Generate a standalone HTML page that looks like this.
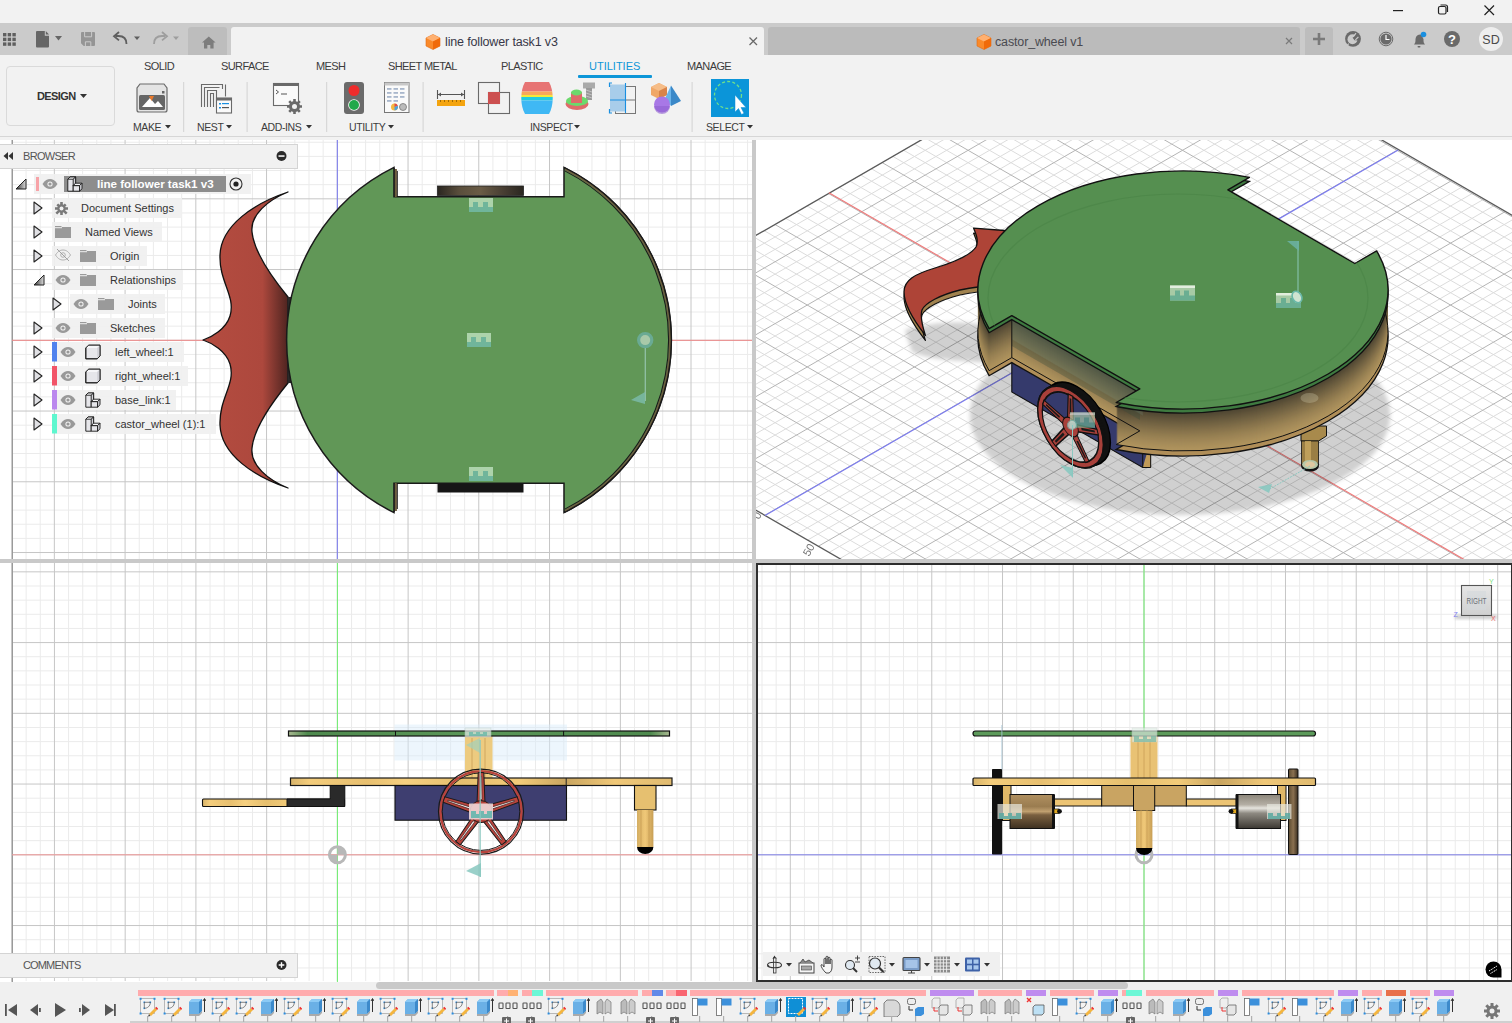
<!DOCTYPE html><html><head><meta charset="utf-8"><style>
*{margin:0;padding:0;box-sizing:border-box}
html,body{width:1512px;height:1023px;overflow:hidden;background:#f2f2f2;font-family:"Liberation Sans",sans-serif;position:relative}
.a{position:absolute}
.t{position:absolute;white-space:nowrap;color:#3c3c3c;line-height:1}
svg{position:absolute;overflow:visible}
.tab{font-size:11px;color:#3c3c3c;letter-spacing:-0.6px;top:61px!important}
.lbl{font-size:10.5px;color:#3c3c3c;letter-spacing:-0.4px}
.row{position:absolute;height:20px;background:rgba(240,240,240,0.92)}
.rt{position:absolute;font-size:11px;color:#333;white-space:nowrap;line-height:1}
</style></head><body>
<!-- TITLE BAR -->
<svg width="1512" height="23" style="left:0;top:0">
<rect x="1393" y="10" width="10" height="1.2" fill="#222"/>
<rect x="1438.5" y="6.5" width="7.5" height="7.5" rx="1.5" fill="none" stroke="#222" stroke-width="1.2"/>
<path d="M1440.5 5h5a2 2 0 0 1 2 2v5" fill="none" stroke="#222" stroke-width="1.2"/>
<path d="M1484.5 5.5l9.5 9.5M1494 5.5l-9.5 9.5" stroke="#222" stroke-width="1.2"/>
</svg>
<!-- TAB BAR -->
<div class="a" style="left:0;top:23px;width:1512px;height:32px;background:#cbcbcb"></div>
<svg width="1512" height="32" style="left:0;top:23px">
<!-- grid icon -->
<g fill="#5f5f5f"><rect x="3" y="10" width="3.4" height="3.4"/><rect x="7.7" y="10" width="3.4" height="3.4"/><rect x="12.4" y="10" width="3.4" height="3.4"/><rect x="3" y="14.7" width="3.4" height="3.4"/><rect x="7.7" y="14.7" width="3.4" height="3.4"/><rect x="12.4" y="14.7" width="3.4" height="3.4"/><rect x="3" y="19.4" width="3.4" height="3.4"/><rect x="7.7" y="19.4" width="3.4" height="3.4"/><rect x="12.4" y="19.4" width="3.4" height="3.4"/></g>
<!-- file icon -->
<path d="M37 8h7.8v4.8h4.2v10.8a1 1 0 0 1-1 1h-11a1 1 0 0 1-1-1v-14.6a1 1 0 0 1 1-1z" fill="#666"/><path d="M45.8 8l3.2 3.6h-3.2z" fill="#666"/>
<path d="M55 13h7l-3.5 4.5z" fill="#666"/>
<!-- save -->
<path d="M82 9h12a1 1 0 0 1 1 1v12a1 1 0 0 1-1 1h-10.3l-2.7-2.7v-10.3a1 1 0 0 1 1-1z" fill="#959595"/><path d="M84.6 9v4.8h7v-4.8M85.4 23v-4.2h5.4v4.2" fill="none" stroke="#cbcbcb" stroke-width="1"/>
<!-- undo -->
<path d="M126.5 21c0-6-3-8-8-8h-3" fill="none" stroke="#5f5f5f" stroke-width="1.8"/><path d="M119 9l-5 4.2 5 4.2" fill="none" stroke="#5f5f5f" stroke-width="1.8"/>
<path d="M134 13.5h6l-3 3.5z" fill="#5f5f5f"/>
<!-- redo -->
<path d="M154 21c0-6 3-8 8-8h3" fill="none" stroke="#9e9e9e" stroke-width="1.8"/><path d="M162 9l5 4.2-5 4.2" fill="none" stroke="#9e9e9e" stroke-width="1.8"/>
<path d="M173 13.5h6l-3 3.5z" fill="#9e9e9e"/>
<!-- home tab -->
<path d="M188 32V7a3 3 0 0 1 3-3h33a3 3 0 0 1 3 3v25z" fill="#bdbdbd"/>
<path d="M202 19.5l6.8-6 6.8 6h-2v6h-3.3v-3.6h-3v3.6h-3.3v-6z" fill="#7d7d7d"/>
<!-- active tab -->
<path d="M231 32V7a3 3 0 0 1 3-3h527a3 3 0 0 1 3 3v25z" fill="#f2f2f2"/>
<g transform="translate(426,11.5)"><path d="M7 0l7 3.5v8L7 15 0 11.5v-8z" fill="#fa8a2a" stroke="#e06a10" stroke-width="0.6"/><path d="M0 3.5L7 7l7-3.5L7 0z" fill="#ffb070"/><path d="M7 7v8l7-3.5v-8z" fill="#f06a0a"/></g>
<path d="M749.5 14.5l7.5 7.5M757 14.5l-7.5 7.5" stroke="#6a6a6a" stroke-width="1.3"/>
<!-- second tab -->
<path d="M768 32V7a3 3 0 0 1 3-3h526a3 3 0 0 1 3 3v25z" fill="#bbbbbb"/>
<g transform="translate(977,11.5)"><path d="M7 0l7 3.5v8L7 15 0 11.5v-8z" fill="#fa8a2a" stroke="#e06a10" stroke-width="0.6"/><path d="M0 3.5L7 7l7-3.5L7 0z" fill="#ffb070"/><path d="M7 7v8l7-3.5v-8z" fill="#f06a0a"/></g>
<path d="M1286 15l6 6M1292 15l-6 6" stroke="#7a7a7a" stroke-width="1.2"/>
<!-- plus tab -->
<path d="M1305 32V7a3 3 0 0 1 3-3h22a3 3 0 0 1 3 3v25z" fill="#bdbdbd"/>
<path d="M1319 10v12M1313 16h12" stroke="#7a7a7a" stroke-width="2.6"/>
<!-- extension -->
<circle cx="1353" cy="15.8" r="7.9" fill="#6a6a6a"/>
<circle cx="1352.5" cy="16.3" r="5" fill="#cbcbcb"/>
<path d="M1352.6 14.8L1357.5 10A6 6 0 0 1 1358.6 17.5L1354.5 17.2z" fill="#6a6a6a"/>
<path d="M1353.2 13.8l2.8-3.6M1355.4 16.8l3-3M1348.8 20.6l-3.2 3" stroke="#cbcbcb" stroke-width="1.2"/>
<!-- clock -->
<circle cx="1386" cy="16" r="6.8" fill="none" stroke="#6a6a6a" stroke-width="1"/>
<circle cx="1386" cy="16" r="5.6" fill="#6a6a6a"/>
<path d="M1386 12v4.5h3.5" fill="none" stroke="#fff" stroke-width="1.2"/>
<!-- bell -->
<path d="M1414 21.5c1.5-1.5 1.5-3 1.5-5.5a4.5 4.5 0 0 1 7 -3.8v1.3a4 4 0 0 0 1 2.5c0 2.5 0 4 1.5 5.5z" fill="#6a6a6a"/>
<rect x="1417.5" y="23" width="3" height="1.4" rx="0.7" fill="#6a6a6a"/>
<circle cx="1423.5" cy="11.5" r="2.8" fill="#1a8fe0"/>
<!-- help -->
<circle cx="1452" cy="16" r="8" fill="#6a6a6a"/>
<text x="1452" y="20.5" font-size="13" font-weight="bold" fill="#fff" text-anchor="middle" font-family="Liberation Sans">?</text>
<!-- avatar -->
<circle cx="1491" cy="16" r="12" fill="#eeeeee"/>
<text x="1491" y="20.5" font-size="12.5" fill="#4a4a4a" text-anchor="middle" font-family="Liberation Sans">SD</text>
</svg>
<div class="t" style="left:445px;top:36px;font-size:12.5px;color:#383848;letter-spacing:-0.15px">line follower task1 v3</div>
<div class="t" style="left:995px;top:36px;font-size:12.5px;color:#4a4a50;letter-spacing:-0.15px">castor_wheel v1</div>

<!-- TOOLBAR -->
<div class="a" style="left:0;top:136px;width:1512px;height:1px;background:#d6d6d6"></div>
<div class="a" style="left:6px;top:66px;width:109px;height:60px;border:1.5px solid #dadada;border-radius:4px"></div>
<div class="t" style="left:37px;top:91px;font-size:11px;font-weight:bold;color:#333;letter-spacing:-0.6px">DESIGN</div>
<svg width="10" height="10" style="left:80px;top:93px"><path d="M0 1h7l-3.5 4z" fill="#333"/></svg>
<div class="t tab" style="left:144px;top:61px">SOLID</div>
<div class="t tab" style="left:221px;top:61px">SURFACE</div>
<div class="t tab" style="left:316px;top:61px">MESH</div>
<div class="t tab" style="left:388px;top:61px">SHEET METAL</div>
<div class="t tab" style="left:501px;top:61px">PLASTIC</div>
<div class="t tab" style="left:589px;top:61px;color:#0d96d8;letter-spacing:0">UTILITIES</div>
<div class="a" style="left:578px;top:75px;width:74px;height:3px;background:#0d96d8;border-radius:1px"></div>
<div class="t tab" style="left:687px;top:61px">MANAGE</div>
<!-- group labels -->
<div class="t lbl" style="left:133px;top:122px">MAKE</div>
<div class="t lbl" style="left:197px;top:122px">NEST</div>
<div class="t lbl" style="left:261px;top:122px">ADD-INS</div>
<div class="t lbl" style="left:349px;top:122px">UTILITY</div>
<div class="t lbl" style="left:530px;top:122px">INSPECT</div>
<div class="t lbl" style="left:706px;top:122px">SELECT</div>
<svg width="1512" height="140" style="left:0;top:0">
<g fill="#333"><path d="M165 125h6l-3 3.5z"/><path d="M226 125h6l-3 3.5z"/><path d="M306 125h6l-3 3.5z"/><path d="M388 125h6l-3 3.5z"/><path d="M574 125h6l-3 3.5z"/><path d="M747 125h6l-3 3.5z"/></g>
<g fill="#d8d8d8"><rect x="183" y="82" width="1.2" height="50"/><rect x="246.5" y="82" width="1.2" height="50"/><rect x="326" y="82" width="1.2" height="50"/><rect x="422.5" y="82" width="1.2" height="50"/><rect x="691.5" y="82" width="1.2" height="50"/></g>
<!-- make icon -->
<path d="M140 84h24l3 4v22a2 2 0 0 1-2 2h-26a2 2 0 0 1-2-2v-22z" fill="#e4e4e4" stroke="#6a6a6a" stroke-width="1.2"/>
<rect x="139" y="95" width="26" height="15" rx="1.5" fill="#666"/><rect x="162" y="91" width="2.5" height="2.5" fill="#666"/>
<path d="M142 107l8-9 5 6 3-3 5 6z" fill="#fff"/><path d="M149 96h5l-2.5 5z" fill="#e8782a"/>
<!-- nest icon -->
<path d="M201.5 107V84.5h21V89M204.5 107V87.5h15M207.5 107V90.5h9v16.5M210.5 107V93.5h3v13.5M225.5 84.5v12" fill="none" stroke="#6a6a6a" stroke-width="1.1"/>
<rect x="216.5" y="98" width="15" height="15" fill="#fafafa" stroke="#6a6a6a" stroke-width="1.1"/><rect x="216.5" y="98" width="15" height="2.5" fill="#6a6a6a"/>
<g fill="#1a8fe0"><rect x="219" y="103" width="2" height="1.5"/><rect x="222" y="103" width="7" height="1.2"/><rect x="219" y="107" width="2" height="1.5"/></g><rect x="222" y="107" width="7" height="1.2" fill="#555"/>
<!-- add-ins -->
<rect x="273.5" y="83.5" width="25" height="22" fill="#fafafa" stroke="#6a6a6a" stroke-width="1.1"/><rect x="273.5" y="83.5" width="25" height="2.5" fill="#6a6a6a"/>
<path d="M276 90l2.5 2-2.5 2" fill="none" stroke="#555" stroke-width="1"/><rect x="281" y="93.5" width="6" height="1" fill="#555"/>
<circle cx="294.5" cy="106.5" r="5.5" fill="#6a6a6a"/><circle cx="294.5" cy="106.5" r="2.5" fill="#f2f2f2"/>
<g stroke="#6a6a6a" stroke-width="2.6"><path d="M294.5 99v15M287 106.5h15M289.2 101.2l10.6 10.6M299.8 101.2l-10.6 10.6"/></g><circle cx="294.5" cy="106.5" r="2.5" fill="#f2f2f2"/>
<!-- traffic light -->
<rect x="344" y="82" width="20" height="32" rx="3" fill="#6b6b6b"/>
<circle cx="354" cy="90.5" r="5.5" fill="#ee2c2c"/><circle cx="354" cy="105" r="5.8" fill="#fff"/><circle cx="354" cy="105" r="5" fill="#21a84a"/>
<!-- spreadsheet -->
<rect x="384.5" y="82.5" width="24.5" height="30" fill="#fafafa" stroke="#777" stroke-width="1"/><rect x="384.5" y="82.5" width="24.5" height="3" fill="#c8c8c8"/>
<g fill="#a9b7cc"><rect x="387" y="88" width="4.5" height="1.8"/><rect x="393.5" y="88" width="4.5" height="1.8"/><rect x="400" y="88" width="4.5" height="1.8"/><rect x="387" y="92" width="4.5" height="1.8"/><rect x="393.5" y="92" width="4.5" height="1.8"/><rect x="400" y="92" width="4.5" height="1.8"/><rect x="387" y="96" width="4.5" height="1.8"/><rect x="393.5" y="96" width="4.5" height="1.8"/><rect x="400" y="96" width="4.5" height="1.8"/><rect x="387" y="100" width="4.5" height="1.8"/><rect x="393.5" y="100" width="4.5" height="1.8"/></g>
<circle cx="394.5" cy="107" r="3.5" fill="#f4b942"/><path d="M394.5 107V103.5a3.5 3.5 0 0 1 3.3 2.3z" fill="#e04a4a"/><path d="M394.5 107l3.3-1.2A3.5 3.5 0 0 1 394.5 110.5z" fill="#4aa0e0"/>
<circle cx="403" cy="107" r="3.5" fill="#bbb" stroke="#777" stroke-width="0.8"/>
<!-- ruler -->
<path d="M437.5 90v9M464.5 90v9M438 94.5h26" fill="none" stroke="#555" stroke-width="1.1"/><path d="M438 94.5l3-2v4zM464 94.5l-3-2v4z" fill="#555"/>
<rect x="437" y="100" width="28" height="6" fill="#f4a40f"/><g fill="#8a5a00"><rect x="440" y="100" width="0.8" height="2"/><rect x="444" y="100" width="0.8" height="2"/><rect x="448" y="100" width="0.8" height="2"/><rect x="452" y="100" width="0.8" height="2"/><rect x="456" y="100" width="0.8" height="2"/><rect x="460" y="100" width="0.8" height="2"/></g>
<!-- interference -->
<rect x="478.5" y="82.5" width="21" height="21" fill="none" stroke="#6a6a6a" stroke-width="1.1"/><rect x="488.5" y="92.5" width="21" height="21" fill="none" stroke="#6a6a6a" stroke-width="1.1"/><rect x="488" y="92" width="12" height="12" fill="#cc5050"/>
<!-- zebra -->
<clipPath id="zb"><path d="M525 82h24c5 9 5 23 0 32h-24c-5-9-5-23 0-32z"/></clipPath>
<g clip-path="url(#zb)"><rect x="518" y="82" width="36" height="9.5" fill="#e77474"/><rect x="518" y="91.5" width="36" height="3.5" fill="#f8a85a"/><rect x="518" y="95" width="36" height="2" fill="#f3e93a"/><rect x="518" y="97" width="36" height="3.5" fill="#22cbe0"/><rect x="518" y="100.5" width="36" height="14" fill="#3fb8f4"/></g>
<!-- draft analysis -->
<rect x="583" y="82.5" width="12" height="6" fill="#aaa"/><rect x="586" y="88" width="6" height="12" fill="#999"/><g stroke="#ccc" stroke-width="0.8"><path d="M586 90l6 2M586 93l6 2M586 96l6 2"/></g>
<ellipse cx="577" cy="104" rx="11.5" ry="6" fill="#e06a6a"/><path d="M565.5 104a11.5 6 0 0 1 23 0c0 -1 -2 -3 -4 -3.5h-15c-2 .5-4 2.5-4 3.5z" fill="#6cd96c"/>
<ellipse cx="577" cy="101" rx="11" ry="5" fill="#6cd96c"/><rect x="571" y="92" width="11" height="11" fill="#e06a6a"/><ellipse cx="576.5" cy="92.5" rx="5.5" ry="3" fill="#6cd96c"/>
<!-- section -->
<rect x="615.5" y="86.5" width="20" height="27" fill="none" stroke="#777" stroke-width="1"/><path d="M625.5 86.5v27M615.5 100h20" stroke="#777" stroke-width="1"/>
<rect x="610" y="84.5" width="15" height="27" fill="#a8cdea"/><path d="M610 100h15M625.5 83v30" stroke="#1a8fe0" stroke-width="1.1"/>
<path d="M612 83h-2.5v4M612 113h-2.5v-4" fill="none" stroke="#1a8fe0" stroke-width="1.2"/>
<!-- shapes -->
<path d="M659 83l8 4v8l-8 4-8-4v-8z" fill="#f0a868"/><path d="M651 87l8 4 8-4-8-4z" fill="#f6bd88"/><path d="M659 91v8l8-4v-8z" fill="#d8844a"/><path d="M671 85.5l10 15.5-10 5z" fill="#3a88c8"/><path d="M671 85.5l-6 13 6 7.5z" fill="#6ab4ea"/><circle cx="662" cy="104.5" r="8" fill="#a878e6"/><path d="M654 106a8 8 0 0 0 16 0z" fill="#9060d0" opacity="0.6"/>
<!-- select -->
<rect x="711" y="79" width="38" height="38" fill="#0b95d9"/>
<circle cx="728" cy="95" r="13.5" fill="none" stroke="#70e08a" stroke-width="1.3" stroke-dasharray="3 2.2"/>
<path d="M735 95v17l3.5-3.5 3 6 2.5-1.2-3-5.8h5z" fill="#fff" stroke="#0f8fd6" stroke-width="0.5"/>
</svg>

<!-- VIEWPORT FRAME -->
<div class="a" style="left:0;top:140px;width:1512px;height:842px;background:#c9c9c9"></div>
<div class="a" style="left:0;top:140px;width:752px;height:419px;background:#fff"></div>
<div class="a" style="left:756px;top:140px;width:756px;height:419px;background:#fff"></div>
<div class="a" style="left:0;top:563px;width:752px;height:419px;background:#fff"></div>
<div class="a" style="left:756px;top:563px;width:756px;height:419px;background:#fff"></div>

<!-- TOP-LEFT: TOP VIEW -->
<svg width="1512" height="1023" style="left:0;top:0">
<defs>
<clipPath id="cTL"><rect x="0" y="140" width="752" height="419"/></clipPath>
<clipPath id="cTR"><rect x="756" y="140" width="756" height="419"/></clipPath>
<clipPath id="cBL"><rect x="0" y="563" width="752" height="419"/></clipPath>
<clipPath id="cBR"><rect x="756" y="563" width="756" height="419"/></clipPath>
<linearGradient id="finG" x1="0" x2="1" y1="0" y2="0"><stop offset="0" stop-color="#b44c40"/><stop offset="0.7" stop-color="#ad483d"/><stop offset="1" stop-color="#4e2420"/></linearGradient>
<linearGradient id="whB" x1="0" x2="1"><stop offset="0" stop-color="#2a2620"/><stop offset="0.25" stop-color="#5a4e3c"/><stop offset="0.5" stop-color="#6a5c46"/><stop offset="0.75" stop-color="#4a4034"/><stop offset="1" stop-color="#2a2620"/></linearGradient>
</defs>
<g clip-path="url(#cTL)">
<path d="M26.04 140V559M40.19 140V559M68.49 140V559M82.64 140V559M96.78 140V559M110.93 140V559M139.23 140V559M153.38 140V559M167.52 140V559M181.67 140V559M209.97 140V559M224.12 140V559M238.26 140V559M252.41 140V559M280.71 140V559M294.86 140V559M309 140V559M323.15 140V559M351.45 140V559M365.6 140V559M379.74 140V559M393.89 140V559M422.19 140V559M436.34 140V559M450.48 140V559M464.63 140V559M492.93 140V559M507.08 140V559M521.22 140V559M535.37 140V559M563.67 140V559M577.82 140V559M591.96 140V559M606.11 140V559M634.41 140V559M648.56 140V559M662.7 140V559M676.85 140V559M705.15 140V559M719.3 140V559M733.44 140V559M747.59 140V559M12 142.23H752M12 156.38H752M12 170.52H752M12 184.67H752M12 212.97H752M12 227.12H752M12 241.26H752M12 255.41H752M12 283.71H752M12 297.86H752M12 312H752M12 326.15H752M12 354.45H752M12 368.6H752M12 382.74H752M12 396.89H752M12 425.19H752M12 439.34H752M12 453.48H752M12 467.63H752M12 495.93H752M12 510.08H752M12 524.22H752M12 538.37H752" stroke="#ebebeb" stroke-width="1" fill="none"/>
<path d="M54.34 140V559M125.08 140V559M195.82 140V559M266.56 140V559M337.3 140V559M408.04 140V559M478.78 140V559M549.52 140V559M620.26 140V559M691 140V559M12 198.82H752M12 269.56H752M12 340.3H752M12 411.04H752M12 481.78H752M12 552.52H752" stroke="#c6c6c6" stroke-width="1" fill="none"/>
<rect x="11.5" y="140" width="1.5" height="419" fill="#9a9a9a"/>
<rect x="336.8" y="140" width="1" height="419" fill="#7878f0"/>
<rect x="12" y="339.8" width="740" height="1" fill="#f08888"/>
<!-- fin -->
<path d="M288 192C255 203 221 225 220 255C219 282 236 296 230 316C226 329 212 337 203 340C212 343 226 351 230 364C236 384 219 398 220 425C221 455 255 477 288 488C268 480 250 465 252 448C254 428 270 405 288 383L288 297C270 275 254 252 252 232C250 215 268 200 288 192Z" fill="url(#finG)" stroke="#111" stroke-width="1.3" stroke-linejoin="round"/>
<rect x="287.5" y="297" width="5" height="86" fill="#2a2a2a"/>
<!-- body -->
<path d="M394 167.4L394 196.7L564 196.7L564 167.4A192.4 192.4 0 0 1 564 512.6L564 483.3L394 483.3L394 512.6A192.4 192.4 0 0 1 394 167.4Z" fill="#619757" stroke="#1a1a1a" stroke-width="1.5"/>
<clipPath id="rEdge"><rect x="565" y="160" width="120" height="360"/></clipPath>
<g clip-path="url(#rEdge)" fill="none"><circle cx="479" cy="340" r="191.2" stroke="#6e6040" stroke-width="2"/><circle cx="479" cy="340" r="192.4" stroke="#1a1a1a" stroke-width="1.3"/><circle cx="479" cy="340" r="189.6" stroke="#1a1a1a" stroke-width="1.1"/></g>
<rect x="437.5" y="186" width="86" height="9.5" fill="url(#whB)" stroke="#222" stroke-width="0.8"/>
<rect x="437.5" y="483.5" width="86" height="9" fill="#161616"/>
<path d="M395.8 169v28M395.8 483v28" stroke="#6e5c3c" stroke-width="2.2"/><path d="M394.3 168v29M394.3 483v29M397.3 171v26M397.3 483v26" stroke="#1a1a1a" stroke-width="1"/>
<g id="jnt"><rect x="-12" y="-7" width="24" height="14" fill="#b4d8b2" opacity="0.92"/><path d="M-12 2h4v-5h5v5h5v-5h5v5h5v5h-24z" fill="#6db39a" opacity="0.95"/></g>
<use href="#jnt" x="481" y="205"/>
<use href="#jnt" x="479" y="340"/>
<use href="#jnt" x="481" y="474"/>
<circle cx="645.2" cy="340.1" r="6.6" fill="#a9c9a9" stroke="#6aaa94" stroke-width="3.2"/>
<rect x="644.7" y="348" width="1.1" height="53" fill="#9ac8b4"/>
<path d="M631 400l14-8v12z" fill="#7ab8a4" opacity="0.9"/>
</g>

<!-- BOTTOM-LEFT: FRONT VIEW -->
<g clip-path="url(#cBL)">
<path d="M12 563V981M26.14 563V981M40.29 563V981M68.59 563V981M82.74 563V981M96.88 563V981M111.03 563V981M139.33 563V981M153.48 563V981M167.62 563V981M181.77 563V981M210.07 563V981M224.22 563V981M238.36 563V981M252.51 563V981M280.81 563V981M294.96 563V981M309.1 563V981M323.25 563V981M351.55 563V981M365.7 563V981M379.84 563V981M393.99 563V981M422.29 563V981M436.44 563V981M450.58 563V981M464.73 563V981M493.03 563V981M507.18 563V981M521.32 563V981M535.47 563V981M563.77 563V981M577.92 563V981M592.06 563V981M606.21 563V981M634.51 563V981M648.66 563V981M662.8 563V981M676.95 563V981M705.25 563V981M719.4 563V981M733.54 563V981M747.69 563V981M12 585.99H752M12 600.14H752M12 614.28H752M12 628.43H752M12 656.73H752M12 670.88H752M12 685.02H752M12 699.17H752M12 727.47H752M12 741.62H752M12 755.76H752M12 769.91H752M12 798.21H752M12 812.36H752M12 826.5H752M12 840.65H752M12 868.95H752M12 883.1H752M12 897.24H752M12 911.39H752M12 939.69H752M12 953.84H752M12 967.98H752" stroke="#ebebeb" stroke-width="1" fill="none"/>
<path d="M54.44 563V981M125.18 563V981M195.92 563V981M266.66 563V981M337.4 563V981M408.14 563V981M478.88 563V981M549.62 563V981M620.36 563V981M691.1 563V981M12 571.84H752M12 642.58H752M12 713.32H752M12 784.06H752M12 854.8H752M12 925.54H752" stroke="#c6c6c6" stroke-width="1" fill="none"/>
<rect x="11.5" y="563" width="1.5" height="419" fill="#9a9a9a"/>
<rect x="336.9" y="563" width="1" height="419" fill="#6ff06f"/>
<rect x="12" y="854.3" width="740" height="1" fill="#f09898"/>

<defs>
<linearGradient id="tanH" x1="0" x2="1"><stop offset="0" stop-color="#d8b46a"/><stop offset="0.05" stop-color="#f4cd7c"/><stop offset="0.2" stop-color="#e8c070"/><stop offset="0.3" stop-color="#f6d080"/><stop offset="0.45" stop-color="#e6bf6e"/><stop offset="0.6" stop-color="#f2cb79"/><stop offset="0.72" stop-color="#c9a560"/><stop offset="0.85" stop-color="#f0c878"/><stop offset="1" stop-color="#e0bb70"/></linearGradient>
<linearGradient id="grnH" x1="0" x2="1"><stop offset="0" stop-color="#a8b890"/><stop offset="0.05" stop-color="#4e8a4e"/><stop offset="0.5" stop-color="#5a9658"/><stop offset="0.95" stop-color="#4e8a4e"/><stop offset="1" stop-color="#a8b890"/></linearGradient>
<linearGradient id="tanV" x1="0" x2="1"><stop offset="0" stop-color="#d4ae62"/><stop offset="0.5" stop-color="#f0c878"/><stop offset="1" stop-color="#c89f55"/></linearGradient>
</defs>
<rect x="394.5" y="724.5" width="172.5" height="36" fill="#d8ecfa" opacity="0.45"/>
<rect x="465" y="736" width="27.5" height="42" fill="#ecc672" opacity="0.9"/>
<path d="M472 738v40M485 738v40" stroke="#c9a055" stroke-width="0.8"/>
<rect x="288.5" y="731" width="381" height="5" fill="url(#grnH)" stroke="#111" stroke-width="1.2"/>
<path d="M395.5 731v5M563.6 731v5" stroke="#111" stroke-width="1"/>
<rect x="465" y="728" width="26" height="9" fill="#e8f0ec" opacity="0.7" stroke="#bcc" stroke-width="0.6"/>
<path d="M469 736v-4h4v2h3v-2h4v2h3v-2h4v4" fill="#6ab8a8" opacity="0.8"/>
<path d="M466 745l14 -7v15z" fill="#a6d0b8" opacity="0.75"/>
<rect x="290.5" y="778" width="381.5" height="7.5" fill="url(#tanH)" stroke="#1a1a1a" stroke-width="1.2"/>
<path d="M566.2 778v7.5" stroke="#222" stroke-width="1"/>
<rect x="395" y="785.5" width="171.5" height="34.7" fill="#3e3e70" stroke="#111" stroke-width="1.1"/>
<rect x="202.5" y="799" width="142" height="7.5" rx="1" fill="url(#tanH)" stroke="#111" stroke-width="1.1"/>
<path d="M287 799h43.2v-13.5h14.6v21H287z" fill="#2a2a2a" stroke="#111" stroke-width="1"/>
<rect x="634.5" y="785.5" width="21.5" height="24.5" fill="#e6c070" stroke="#111" stroke-width="1.1"/>
<rect x="637" y="810" width="16.4" height="37" fill="url(#tanV)"/>
<path d="M641 810v37M649 810v37" stroke="#c49a50" stroke-width="0.7"/>
<path d="M637 847h16.4a8.2 7 0 0 1-8.2 7 8.2 7 0 0 1-8.2-7z" fill="#000"/>
<!-- wheel -->
<g transform="translate(481,811.6)">
<circle r="42.5" fill="none" stroke="#1a1a1a" stroke-width="1.2"/>
<circle r="40.5" fill="none" stroke="#b8443c" stroke-width="2.4"/>
<circle r="38.8" fill="none" stroke="#1a1a1a" stroke-width="1"/>
<g id="spk"><path d="M-4 -8L-2.8 -39h5.6L4 -8z" fill="#b8443c" stroke="#1a1a1a" stroke-width="1"/><path d="M-1 -12L-0.6 -35h1.2L1 -12z" fill="#fff" stroke="#1a1a1a" stroke-width="0.6" opacity="0.9"/></g>
<use href="#spk" transform="rotate(72)"/><use href="#spk" transform="rotate(144)"/><use href="#spk" transform="rotate(216)"/><use href="#spk" transform="rotate(288)"/>
<circle r="11" fill="#b8443c" stroke="#1a1a1a" stroke-width="1"/>
</g>
<rect x="469" y="803.5" width="24" height="16" fill="#f0d8d8" opacity="0.9"/>
<path d="M471 818v-7h5v3h3v-3h5v3h3v-3h5v7z" fill="#70b8b0"/>
<rect x="479.5" y="740" width="1.4" height="137" fill="#8cc8c0" opacity="0.85"/>
<path d="M466 871l15 -8v14z" fill="#88c8c0" opacity="0.85"/>
<circle cx="337.4" cy="854.8" r="8" fill="none" stroke="#b8b8b8" stroke-width="3"/>
<path d="M337.4 846.8a8 8 0 0 1 8 8h-8zM337.4 862.8a8 8 0 0 1-8-8h8z" fill="#b8b8b8"/>
</g>

<!-- BOTTOM-RIGHT: RIGHT VIEW -->
<g clip-path="url(#cBR)">
<path d="M762 563V981M776.15 563V981M804.45 563V981M818.6 563V981M832.74 563V981M846.89 563V981M875.19 563V981M889.34 563V981M903.48 563V981M917.63 563V981M945.93 563V981M960.08 563V981M974.22 563V981M988.37 563V981M1016.67 563V981M1030.82 563V981M1044.96 563V981M1059.11 563V981M1087.41 563V981M1101.56 563V981M1115.7 563V981M1129.85 563V981M1158.15 563V981M1172.3 563V981M1186.44 563V981M1200.59 563V981M1228.89 563V981M1243.04 563V981M1257.18 563V981M1271.33 563V981M1299.63 563V981M1313.78 563V981M1327.92 563V981M1342.07 563V981M1370.37 563V981M1384.52 563V981M1398.66 563V981M1412.81 563V981M1441.11 563V981M1455.26 563V981M1469.4 563V981M1483.55 563V981M1511.85 563V981M756 585.99H1512M756 600.14H1512M756 614.28H1512M756 628.43H1512M756 656.73H1512M756 670.88H1512M756 685.02H1512M756 699.17H1512M756 727.47H1512M756 741.62H1512M756 755.76H1512M756 769.91H1512M756 798.21H1512M756 812.36H1512M756 826.5H1512M756 840.65H1512M756 868.95H1512M756 883.1H1512M756 897.24H1512M756 911.39H1512M756 939.69H1512M756 953.84H1512M756 967.98H1512" stroke="#ebebeb" stroke-width="1" fill="none"/>
<path d="M790.3 563V981M861.04 563V981M931.78 563V981M1002.52 563V981M1073.26 563V981M1144 563V981M1214.74 563V981M1285.48 563V981M1356.22 563V981M1426.96 563V981M1497.7 563V981M756 571.84H1512M756 642.58H1512M756 713.32H1512M756 784.06H1512M756 854.8H1512M756 925.54H1512" stroke="#c6c6c6" stroke-width="1" fill="none"/>
<rect x="1143.5" y="563" width="1" height="419" fill="#6ff06f"/>
<rect x="756" y="854.3" width="756" height="1" fill="#8888f0"/>
<circle cx="1144" cy="854.8" r="8" fill="none" stroke="#b8b8b8" stroke-width="3"/>
<defs>
<linearGradient id="motB" x1="0" y1="0" x2="0" y2="1"><stop offset="0" stop-color="#b09060"/><stop offset="0.35" stop-color="#9a7c50"/><stop offset="0.5" stop-color="#c0a070"/><stop offset="0.6" stop-color="#7a6040"/><stop offset="1" stop-color="#3e3020"/></linearGradient>
<linearGradient id="motG" x1="0" y1="0" x2="0" y2="1"><stop offset="0" stop-color="#8c867a"/><stop offset="0.3" stop-color="#b4aea4"/><stop offset="0.4" stop-color="#e6e4de"/><stop offset="0.55" stop-color="#8e8a82"/><stop offset="1" stop-color="#3c3832"/></linearGradient>
<linearGradient id="whBr" x1="0" x2="1"><stop offset="0" stop-color="#5a4a30"/><stop offset="0.5" stop-color="#8a7050"/><stop offset="1" stop-color="#3a2e20"/></linearGradient>
</defs>
<rect x="1130.5" y="736" width="27" height="42" fill="#e9c274"/>
<path d="M1138 736v42M1144 736v42M1150 736v42" stroke="#c9a055" stroke-width="0.8"/>
<rect x="973" y="731" width="342.5" height="5" rx="2.5" fill="#5c9a5a" stroke="#111" stroke-width="1.2"/>
<rect x="1132" y="728" width="25" height="14" fill="#e0eee6" opacity="0.65" stroke="#c8d0cc" stroke-width="0.6"/>
<path d="M1134 742v-6h5v3h4v-3h4v3h4v-3h5v6z" fill="#78b8a4" opacity="0.75"/>
<rect x="1001.5" y="725" width="0.8" height="45" fill="#a8c8d8"/>
<rect x="992" y="769" width="10" height="85.5" rx="0.8" fill="#111"/>
<rect x="1288.5" y="769" width="9.5" height="85.5" rx="0.8" fill="url(#whBr)" stroke="#111" stroke-width="1"/>
<rect x="973" y="778" width="342.5" height="7.5" rx="1" fill="url(#tanH)" stroke="#111" stroke-width="1.2"/>
<rect x="1002.5" y="785.5" width="8.5" height="35" fill="#e0b868" stroke="#111" stroke-width="1"/>
<rect x="1277.5" y="785.5" width="8.5" height="35" fill="#e0b868" stroke="#111" stroke-width="1"/>
<rect x="1054" y="799" width="47.7" height="7" fill="#ecc474" stroke="#111" stroke-width="1"/>
<rect x="1186.3" y="799" width="50" height="7" fill="#ecc474" stroke="#111" stroke-width="1"/>
<rect x="1101.7" y="785.5" width="84.6" height="20.5" fill="#c9a462" stroke="#111" stroke-width="1"/>
<rect x="1133.5" y="785.5" width="21.2" height="25" fill="#c9a462" stroke="#111" stroke-width="1"/>
<rect x="1136" y="810.5" width="16.4" height="37.5" fill="url(#tanV)"/>
<path d="M1141 810v38M1147 810v38" stroke="#c49a50" stroke-width="0.7"/>
<path d="M1136 848h16.4a8.2 7 0 0 1-8.2 7 8.2 7 0 0 1-8.2-7z" fill="#000"/>
<rect x="1010" y="794.5" width="44" height="34" fill="url(#motB)" stroke="#111" stroke-width="1"/>
<rect x="1052" y="794.5" width="3" height="34" fill="#111"/>
<rect x="1054" y="809" width="5" height="4.5" fill="#e0a820" stroke="#111" stroke-width="0.7"/><circle cx="1059.5" cy="811.3" r="2.4" fill="#111"/>
<rect x="1236.5" y="794.5" width="44" height="34" fill="url(#motG)" stroke="#111" stroke-width="1"/>
<rect x="1235.5" y="794.5" width="3" height="34" fill="#111"/>
<rect x="1231.5" y="809" width="5" height="4.5" fill="#e0a820" stroke="#111" stroke-width="0.7"/><circle cx="1231" cy="811.3" r="2.4" fill="#111"/>
<rect x="997.5" y="804" width="24.5" height="15" fill="#e8e8e0" opacity="0.7"/>
<path d="M999 819v-6h5v3h4v-3h4v3h4v-3h5v6z" fill="#5aa8a0" opacity="0.85"/>
<rect x="1267" y="804" width="24.5" height="15" fill="#e8e8e0" opacity="0.7"/>
<path d="M1268 819v-6h5v3h4v-3h4v3h4v-3h5v6z" fill="#5aa8a0" opacity="0.85"/>


</g>
<rect x="756" y="563" width="756" height="2" fill="#2e2e2e"/><rect x="756" y="563" width="2" height="419" fill="#2e2e2e"/><rect x="756" y="980" width="756" height="2" fill="#2e2e2e"/><rect x="1511" y="563" width="1" height="419" fill="#2e2e2e"/>
<!-- viewcube -->
<defs><linearGradient id="vcg" x1="0" y1="0" x2="0" y2="1"><stop offset="0" stop-color="#e6e6e6"/><stop offset="1" stop-color="#d0d0d0"/></linearGradient>
<filter id="vcs" x="-50%" y="-50%" width="200%" height="200%"><feGaussianBlur stdDeviation="1.5"/></filter></defs>
<rect x="1455" y="615" width="42" height="4" fill="#999" opacity="0.5" filter="url(#vcs)"/>
<rect x="1461.5" y="585.5" width="30" height="30" fill="url(#vcg)" stroke="#555" stroke-width="1.1"/>
<rect x="1467" y="591" width="19" height="19" fill="#d4d8dc" opacity="0.6"/>
<text x="1476.5" y="604" font-family="Liberation Sans" font-size="7.5" fill="#6a6e74" text-anchor="middle" transform="translate(1476.5,0) scale(0.85,1.15) translate(-1476.5,-79)">RIGHT</text>
<text x="1489" y="584" font-family="Liberation Sans" font-size="7" fill="#7de07d">Y</text>
<text x="1453.5" y="617" font-family="Liberation Sans" font-size="7" fill="#8080f0">Z</text>
<text x="1491" y="621" font-family="Liberation Sans" font-size="7" fill="#f07070">X</text>
<!-- nav bar -->
<rect x="763" y="952" width="237" height="24" fill="#f0f0f0"/>
<g transform="translate(766,954)">
<path d="M8.5 3v16M7 5l1.5-2.5L10 5" fill="none" stroke="#333" stroke-width="1.1"/><rect x="7.5" y="4" width="2.5" height="15" fill="#eee" stroke="#333" stroke-width="0.8"/>
<ellipse cx="8.5" cy="11" rx="7" ry="2.8" fill="none" stroke="#333" stroke-width="1.1"/><path d="M1 12l2.5 2 -0.5-3z" fill="#333"/>
<path d="M20 9h6l-3 3.5z" fill="#333"/>
<rect x="33" y="9" width="15" height="10" fill="#f6f6f6" stroke="#444" stroke-width="1"/><rect x="35.5" y="12" width="10" height="4" fill="#a8a8a8" stroke="#444" stroke-width="0.6"/><path d="M34 9l3-4 2 3 4-2 4 3" fill="#888" stroke="#444" stroke-width="0.8"/>
<path d="M60 19c-3-3-5-6-5-8 1-1 2 0 3 2v-8c0-1 2-1 2 0v5-7c0-1 2-1 2 0v7-6c0-1 2-1 2 0v6-4c0-1 2-1 2 0v7c0 3-1 5-3 6z" fill="#f6f6f6" stroke="#333" stroke-width="0.9"/>
<circle cx="84" cy="11" r="4.5" fill="#dfe8f0" stroke="#333" stroke-width="1.1"/><path d="M87 14l4 4" stroke="#333" stroke-width="2"/><path d="M89 4h5M91.5 1.5v5M89 8h5" stroke="#333" stroke-width="0.9"/>
<rect x="103" y="2.5" width="16" height="16" fill="none" stroke="#444" stroke-width="0.8" stroke-dasharray="1.5 1.2"/><circle cx="109" cy="9.5" r="5.5" fill="#dfe8f0" stroke="#333" stroke-width="1.2"/><path d="M113 13.5l4.5 4.5" stroke="#333" stroke-width="2.2"/>
<path d="M123 9h6l-3 3.5z" fill="#333"/>
<rect x="137" y="3.5" width="17" height="13" rx="1" fill="#7a9cc8" stroke="#444" stroke-width="1.1"/><rect x="139.5" y="6" width="12" height="8" fill="#a6c4e8"/><path d="M142 19h7M145.5 16.5v2.5" stroke="#444" stroke-width="1.1"/>
<path d="M158 9h6l-3 3.5z" fill="#333"/>
<rect x="168" y="2.5" width="16" height="16" fill="#8a8a8a"/><g stroke="#f0f0f0" stroke-width="0.9"><path d="M171 2.5v16M174.2 2.5v16M177.4 2.5v16M180.6 2.5v16M168 5.7h16M168 8.9h16M168 12.1h16M168 15.3h16"/></g>
<path d="M188 9h6l-3 3.5z" fill="#333"/>
<rect x="199" y="3.5" width="15" height="14" rx="1" fill="#3e62a8"/><g fill="#a8c8ee"><rect x="201" y="5.5" width="5" height="4.2"/><rect x="207.5" y="5.5" width="5" height="4.2"/><rect x="201" y="11.3" width="5" height="4.2"/><rect x="207.5" y="11.3" width="5" height="4.2"/></g>
<path d="M218 9h6l-3 3.5z" fill="#333"/>
</g>
<path d="M1501.5 977.5H1493.5a8 8 0 1 1 8-8z" fill="#000"/><path d="M1489 971l8-5M1490.5 973.5l6.5-4" stroke="#fff" stroke-width="1" stroke-dasharray="1.3 0.7"/>


<!-- TOP-RIGHT: 3D -->
<g clip-path="url(#cTR)">
<path d="M518.15 372.93L1151.74 7.13M528.87 379.12L1162.46 13.32M539.59 385.31L1173.18 19.51M561.04 397.69L1194.62 31.89M571.76 403.88L1205.34 38.08M582.48 410.07L1216.06 44.27M593.2 416.26L1226.79 50.46M614.64 428.64L1248.23 62.84M625.37 434.83L1258.95 69.03M636.09 441.02L1269.67 75.22M646.81 447.21L1280.39 81.41M668.25 459.59L1301.83 93.79M678.97 465.78L1312.56 99.98M689.69 471.97L1323.28 106.17M700.41 478.16L1334 112.36M721.86 490.54L1355.44 124.74M732.58 496.73L1366.16 130.93M743.3 502.92L1376.88 137.12M754.02 509.11L1387.61 143.31M775.46 521.49L1409.05 155.69M786.19 527.68L1419.77 161.88M796.91 533.87L1430.49 168.07M807.63 540.06L1441.21 174.26M829.07 552.44L1462.66 186.64M839.79 558.63L1473.38 192.83M850.51 564.82L1484.1 199.02M861.24 571.01L1494.82 205.21M882.68 583.39L1516.26 217.59M893.4 589.58L1526.98 223.78M904.12 595.77L1537.71 229.97M914.84 601.96L1548.43 236.16M936.29 614.34L1569.87 248.54M947.01 620.53L1580.59 254.73M957.73 626.72L1591.31 260.92M968.45 632.91L1602.03 267.11M989.89 645.29L1623.48 279.49M1000.61 651.48L1634.2 285.68M1011.34 657.67L1644.92 291.87M1022.06 663.86L1655.64 298.06M1043.5 676.24L1677.08 310.44M1054.22 682.43L1687.81 316.63M1064.94 688.62L1698.53 322.82M1075.66 694.81L1709.25 329.01M1097.11 707.19L1730.69 341.39M1107.83 713.38L1741.41 347.58M1118.55 719.57L1752.13 353.77M1129.27 725.76L1762.85 359.96M1150.71 738.14L1784.3 372.34M1161.43 744.33L1795.02 378.53M1172.16 750.52L1805.74 384.72M1182.88 756.71L1816.46 390.91M1204.32 769.09L1837.9 403.29M1215.04 775.28L1848.63 409.48M1225.76 781.47L1859.35 415.67M1236.48 787.66L1870.07 421.86M1257.93 800.04L1891.51 434.24M1268.65 806.23L1902.23 440.43M1279.37 812.42L1912.95 446.62M1290.09 818.61L1923.68 452.81M1311.53 830.99L1945.12 465.19M1322.26 837.18L1955.84 471.38M1332.98 843.37L1966.56 477.57M1343.7 849.56L1977.28 483.76M1365.14 861.94L1998.73 496.14M528.28 366.82L1381.32 859.32M539.01 360.63L1392.04 853.13M549.73 354.44L1402.76 846.94M571.17 342.06L1424.2 834.56M581.89 335.87L1434.93 828.37M592.61 329.68L1445.65 822.18M603.33 323.49L1456.37 815.99M624.78 311.11L1477.81 803.61M635.5 304.92L1488.53 797.42M646.22 298.73L1499.25 791.23M656.94 292.54L1509.98 785.04M678.38 280.16L1531.42 772.66M689.1 273.97L1542.14 766.47M699.83 267.78L1552.86 760.28M710.55 261.59L1563.58 754.09M731.99 249.21L1585.03 741.71M742.71 243.02L1595.75 735.52M753.43 236.83L1606.47 729.33M764.15 230.64L1617.19 723.14M785.6 218.26L1638.63 710.76M796.32 212.07L1649.35 704.57M807.04 205.88L1660.07 698.38M817.76 199.69L1670.8 692.19M839.2 187.31L1692.24 679.81M849.93 181.12L1702.96 673.62M860.65 174.93L1713.68 667.43M871.37 168.74L1724.4 661.24M892.81 156.36L1745.85 648.86M903.53 150.17L1756.57 642.67M914.25 143.98L1767.29 636.48M924.98 137.79L1778.01 630.29M946.42 125.41L1799.45 617.91M957.14 119.22L1810.17 611.72M967.86 113.03L1820.9 605.53M978.58 106.84L1831.62 599.34M1000.03 94.46L1853.06 586.96M1010.75 88.27L1863.78 580.77M1021.47 82.08L1874.5 574.58M1032.19 75.89L1885.22 568.39M1053.63 63.51L1906.67 556.01M1064.35 57.32L1917.39 549.82M1075.07 51.13L1928.11 543.63M1085.8 44.94L1938.83 537.44M1107.24 32.56L1960.27 525.06M1117.96 26.37L1971 518.87M1128.68 20.18L1981.72 512.68M1139.4 13.99L1992.44 506.49" stroke="#dcdcdc" stroke-width="1" fill="none"/>
<path d="M550.32 391.5L1183.9 25.7M603.92 422.45L1237.51 56.65M657.53 453.4L1291.11 87.6M711.14 484.35L1344.72 118.55M764.74 515.3L1398.33 149.5M818.35 546.25L1451.93 180.45M871.96 577.2L1505.54 211.4M925.56 608.15L1559.15 242.35M979.17 639.1L1612.76 273.3M1032.78 670.05L1666.36 304.25M1086.39 701L1719.97 335.2M1139.99 731.95L1773.58 366.15M1193.6 762.9L1827.18 397.1M1247.21 793.85L1880.79 428.05M1300.81 824.8L1934.4 459M1354.42 855.75L1988 489.95M560.45 348.25L1413.48 840.75M614.05 317.3L1467.09 809.8M667.66 286.35L1520.7 778.85M721.27 255.4L1574.3 747.9M774.88 224.45L1627.91 716.95M828.48 193.5L1681.52 686M882.09 162.55L1735.12 655.05M935.7 131.6L1788.73 624.1M989.3 100.65L1842.34 593.15M1042.91 69.7L1895.95 562.2M1096.52 38.75L1949.55 531.25M1150.12 7.8L2003.16 500.3" stroke="#b4b4b4" stroke-width="1" fill="none"/>
<path d="M517.94 372.8L1151.51 7" stroke="#5a5a5a" stroke-width="1.3"/><path d="M517.94 372.8L1370.95 865.3" stroke="#5a5a5a" stroke-width="1.3"/><path d="M1151.51 7L2004.52 499.5" stroke="#5a5a5a" stroke-width="1.3"/>
<path d="M765 515.5L1011 373.5" stroke="#7c7cf0" stroke-width="1.2"/>
<path d="M1011 373.5L1398.2 150" stroke="#7c7cf0" stroke-width="1.2"/>
<path d="M828.9 192.7L1465 560" stroke="#f07a7a" stroke-width="1.2"/>
<g font-family="Liberation Sans" font-size="11" fill="#777">
<text transform="translate(759,520) rotate(-60)">0</text>
<text transform="translate(809,557) rotate(-60)">50</text>
</g>
<defs><filter id="blur8" x="-30%" y="-30%" width="160%" height="160%"><feGaussianBlur stdDeviation="2.2"/></filter><linearGradient id="finT" x1="0" y1="0" x2="0" y2="1"><stop offset="0" stop-color="#c06040"/><stop offset="1" stop-color="#b04438"/></linearGradient></defs><g filter="url(#blur8)" fill="#d0d0d0" style="mix-blend-mode:multiply"><ellipse cx="1180" cy="415" rx="210" ry="100"/><path d="M905 330C930 322 970 318 1000 330L1010 365C970 360 935 362 912 352z"/></g><path transform="translate(0,5)" d="M973.6 228.2L1004.4 230.5L1004 285C990 285.5 977 286 960 290C940 295 925 303 922 310C920 316 923 328 925.4 335.4C915 322 904 306 904 292C904 280 915 274 935 268C955 262 970 256 976 247C979 241 976 234 973.6 228.2Z" fill="#a0824e" stroke="#111" stroke-width="1.2" stroke-linejoin="round"/><path d="M973.6 228.2L1004.4 230.5L1004 285C990 285.5 977 286 960 290C940 295 925 303 922 310C920 316 923 328 925.4 335.4C915 322 904 306 904 292C904 280 915 274 935 268C955 262 970 256 976 247C979 241 976 234 973.6 228.2Z" fill="#ae4437" stroke="#111" stroke-width="1.3" stroke-linejoin="round"/><path d="M1301 426h25.5v10l-8 5h-17.5z" fill="#a88a4c" stroke="#111" stroke-width="1"/><rect x="1301.5" y="441" width="17" height="24" fill="#9a7e44" stroke="#111" stroke-width="0.8"/><rect x="1305" y="441" width="6" height="24" fill="#c8a860" opacity="0.8"/><ellipse cx="1310" cy="466" rx="9" ry="5.5" fill="#111"/><ellipse cx="1310" cy="464.5" rx="8" ry="4.5" fill="#b8c8a8"/><ellipse cx="1310" cy="464.5" rx="5" ry="3" fill="#e0c8a0"/><path d="M1011.8 360L1011.8 392L1142.7 467.5L1150 467.5L1150 440L1011.8 360z" fill="#353a6c" stroke="#111" stroke-width="1.1"/><path d="M1142.7 440v27.5M1142.7 467.5h8v-27" fill="#c09a58" stroke="#111" stroke-width="1"/><clipPath id="wallclip"><path d="M881.5 -10.2 L1614.6 413.5 L1600 413.5 L1600 700 L800 700 L800 -10.2 Z"/></clipPath><g clip-path="url(#wallclip)"><path d="M1249.4 224.4 L1227.9 236.8 L1354.8 310.5 L1376.6 297.9 A205.0 119.0 0 0 1 1116.2 449.5 L1139.8 435.9 L1011.8 362.6 L989.1 375.7 A205.0 119.0 0 0 1 1249.4 224.4 Z" fill="#b08e58" stroke="#111" stroke-width="1.3"/><path d="M1249.4 219.4 L1227.9 231.8 L1354.8 305.5 L1376.6 292.9 A205.0 119.0 0 0 1 1116.2 444.5 L1139.8 430.9 L1011.8 357.6 L989.1 370.7 A205.0 119.0 0 0 1 1249.4 219.4 Z" fill="#b0945e"/><path d="M1249.4 218.4 L1227.9 230.8 L1354.8 304.5 L1376.6 291.9 A205.0 119.0 0 0 1 1116.2 443.5 L1139.8 429.9 L1011.8 356.6 L989.1 369.7 A205.0 119.0 0 0 1 1249.4 218.4 Z" fill="#af935d"/><path d="M1249.4 217.4 L1227.9 229.8 L1354.8 303.5 L1376.6 290.9 A205.0 119.0 0 0 1 1116.2 442.5 L1139.8 428.9 L1011.8 355.6 L989.1 368.7 A205.0 119.0 0 0 1 1249.4 217.4 Z" fill="#ad925d"/><path d="M1249.4 216.4 L1227.9 228.8 L1354.8 302.5 L1376.6 289.9 A205.0 119.0 0 0 1 1116.2 441.5 L1139.8 427.9 L1011.8 354.6 L989.1 367.7 A205.0 119.0 0 0 1 1249.4 216.4 Z" fill="#ac915c"/><path d="M1249.4 215.4 L1227.9 227.8 L1354.8 301.5 L1376.6 288.9 A205.0 119.0 0 0 1 1116.2 440.5 L1139.8 426.9 L1011.8 353.6 L989.1 366.7 A205.0 119.0 0 0 1 1249.4 215.4 Z" fill="#aa8f5b"/><path d="M1249.4 214.4 L1227.9 226.8 L1354.8 300.5 L1376.6 287.9 A205.0 119.0 0 0 1 1116.2 439.5 L1139.8 425.9 L1011.8 352.6 L989.1 365.7 A205.0 119.0 0 0 1 1249.4 214.4 Z" fill="#a88e5a"/><path d="M1249.4 213.4 L1227.9 225.8 L1354.8 299.5 L1376.6 286.9 A205.0 119.0 0 0 1 1116.2 438.5 L1139.8 424.9 L1011.8 351.6 L989.1 364.7 A205.0 119.0 0 0 1 1249.4 213.4 Z" fill="#a68c5a"/><path d="M1249.4 212.4 L1227.9 224.8 L1354.8 298.5 L1376.6 285.9 A205.0 119.0 0 0 1 1116.2 437.5 L1139.8 423.9 L1011.8 350.6 L989.1 363.7 A205.0 119.0 0 0 1 1249.4 212.4 Z" fill="#a48b59"/><path d="M1249.4 211.4 L1227.9 223.8 L1354.8 297.5 L1376.6 284.9 A205.0 119.0 0 0 1 1116.2 436.5 L1139.8 422.9 L1011.8 349.6 L989.1 362.7 A205.0 119.0 0 0 1 1249.4 211.4 Z" fill="#a28958"/><path d="M1249.4 210.4 L1227.9 222.8 L1354.8 296.5 L1376.6 283.9 A205.0 119.0 0 0 1 1116.2 435.5 L1139.8 421.9 L1011.8 348.6 L989.1 361.7 A205.0 119.0 0 0 1 1249.4 210.4 Z" fill="#a08757"/><path d="M1249.4 209.4 L1227.9 221.8 L1354.8 295.5 L1376.6 282.9 A205.0 119.0 0 0 1 1116.2 434.5 L1139.8 420.9 L1011.8 347.6 L989.1 360.7 A205.0 119.0 0 0 1 1249.4 209.4 Z" fill="#9e8556"/><path d="M1249.4 208.4 L1227.9 220.8 L1354.8 294.5 L1376.6 281.9 A205.0 119.0 0 0 1 1116.2 433.5 L1139.8 419.9 L1011.8 346.6 L989.1 359.7 A205.0 119.0 0 0 1 1249.4 208.4 Z" fill="#9c8455"/><path d="M1249.4 207.4 L1227.9 219.8 L1354.8 293.5 L1376.6 280.9 A205.0 119.0 0 0 1 1116.2 432.5 L1139.8 418.9 L1011.8 345.6 L989.1 358.7 A205.0 119.0 0 0 1 1249.4 207.4 Z" fill="#998254"/><path d="M1249.4 206.4 L1227.9 218.8 L1354.8 292.5 L1376.6 279.9 A205.0 119.0 0 0 1 1116.2 431.5 L1139.8 417.9 L1011.8 344.6 L989.1 357.7 A205.0 119.0 0 0 1 1249.4 206.4 Z" fill="#978053"/><path d="M1249.4 205.4 L1227.9 217.8 L1354.8 291.5 L1376.6 278.9 A205.0 119.0 0 0 1 1116.2 430.5 L1139.8 416.9 L1011.8 343.6 L989.1 356.7 A205.0 119.0 0 0 1 1249.4 205.4 Z" fill="#947e51"/><path d="M1249.4 204.4 L1227.9 216.8 L1354.8 290.5 L1376.6 277.9 A205.0 119.0 0 0 1 1116.2 429.5 L1139.8 415.9 L1011.8 342.6 L989.1 355.7 A205.0 119.0 0 0 1 1249.4 204.4 Z" fill="#927c50"/><path d="M1249.4 203.4 L1227.9 215.8 L1354.8 289.5 L1376.6 276.9 A205.0 119.0 0 0 1 1116.2 428.5 L1139.8 414.9 L1011.8 341.6 L989.1 354.7 A205.0 119.0 0 0 1 1249.4 203.4 Z" fill="#8f7a4f"/><path d="M1249.4 202.4 L1227.9 214.8 L1354.8 288.5 L1376.6 275.9 A205.0 119.0 0 0 1 1116.2 427.5 L1139.8 413.9 L1011.8 340.6 L989.1 353.7 A205.0 119.0 0 0 1 1249.4 202.4 Z" fill="#8c774e"/><path d="M1249.4 201.4 L1227.9 213.8 L1354.8 287.5 L1376.6 274.9 A205.0 119.0 0 0 1 1116.2 426.5 L1139.8 412.9 L1011.8 339.6 L989.1 352.7 A205.0 119.0 0 0 1 1249.4 201.4 Z" fill="#8a754d"/><path d="M1249.4 200.4 L1227.9 212.8 L1354.8 286.5 L1376.6 273.9 A205.0 119.0 0 0 1 1116.2 425.5 L1139.8 411.9 L1011.8 338.6 L989.1 351.7 A205.0 119.0 0 0 1 1249.4 200.4 Z" fill="#87734c"/><path d="M1249.4 199.4 L1227.9 211.8 L1354.8 285.5 L1376.6 272.9 A205.0 119.0 0 0 1 1116.2 424.5 L1139.8 410.9 L1011.8 337.6 L989.1 350.7 A205.0 119.0 0 0 1 1249.4 199.4 Z" fill="#84714a"/><path d="M1249.4 198.4 L1227.9 210.8 L1354.8 284.5 L1376.6 271.9 A205.0 119.0 0 0 1 1116.2 423.5 L1139.8 409.9 L1011.8 336.6 L989.1 349.7 A205.0 119.0 0 0 1 1249.4 198.4 Z" fill="#816e49"/><path d="M1249.4 197.4 L1227.9 209.8 L1354.8 283.5 L1376.6 270.9 A205.0 119.0 0 0 1 1116.2 422.5 L1139.8 408.9 L1011.8 335.6 L989.1 348.7 A205.0 119.0 0 0 1 1249.4 197.4 Z" fill="#7e6c48"/><path d="M1249.4 196.4 L1227.9 208.8 L1354.8 282.5 L1376.6 269.9 A205.0 119.0 0 0 1 1116.2 421.5 L1139.8 407.9 L1011.8 334.6 L989.1 347.7 A205.0 119.0 0 0 1 1249.4 196.4 Z" fill="#7b6a47"/><path d="M1249.4 195.4 L1227.9 207.8 L1354.8 281.5 L1376.6 268.9 A205.0 119.0 0 0 1 1116.2 420.5 L1139.8 406.9 L1011.8 333.6 L989.1 346.7 A205.0 119.0 0 0 1 1249.4 195.4 Z" fill="#786745"/><path d="M1249.4 194.4 L1227.9 206.8 L1354.8 280.5 L1376.6 267.9 A205.0 119.0 0 0 1 1116.2 419.5 L1139.8 405.9 L1011.8 332.6 L989.1 345.7 A205.0 119.0 0 0 1 1249.4 194.4 Z" fill="#756544"/><path d="M1249.4 193.4 L1227.9 205.8 L1354.8 279.5 L1376.6 266.9 A205.0 119.0 0 0 1 1116.2 418.5 L1139.8 404.9 L1011.8 331.6 L989.1 344.7 A205.0 119.0 0 0 1 1249.4 193.4 Z" fill="#726343"/><path d="M1249.4 192.4 L1227.9 204.8 L1354.8 278.5 L1376.6 265.9 A205.0 119.0 0 0 1 1116.2 417.5 L1139.8 403.9 L1011.8 330.6 L989.1 343.7 A205.0 119.0 0 0 1 1249.4 192.4 Z" fill="#6f6041"/><path d="M1249.4 191.4 L1227.9 203.8 L1354.8 277.5 L1376.6 264.9 A205.0 119.0 0 0 1 1116.2 416.5 L1139.8 402.9 L1011.8 329.6 L989.1 342.7 A205.0 119.0 0 0 1 1249.4 191.4 Z" fill="#6c5e40"/><path d="M1249.4 190.4 L1227.9 202.8 L1354.8 276.5 L1376.6 263.9 A205.0 119.0 0 0 1 1116.2 415.5 L1139.8 401.9 L1011.8 328.6 L989.1 341.7 A205.0 119.0 0 0 1 1249.4 190.4 Z" fill="#695b3f"/><path d="M1249.4 189.4 L1227.9 201.8 L1354.8 275.5 L1376.6 262.9 A205.0 119.0 0 0 1 1116.2 414.5 L1139.8 400.9 L1011.8 327.6 L989.1 340.7 A205.0 119.0 0 0 1 1249.4 189.4 Z" fill="#66593d"/><path d="M1249.4 188.4 L1227.9 200.8 L1354.8 274.5 L1376.6 261.9 A205.0 119.0 0 0 1 1116.2 413.5 L1139.8 399.9 L1011.8 326.6 L989.1 339.7 A205.0 119.0 0 0 1 1249.4 188.4 Z" fill="#63563c"/><path d="M1249.4 187.4 L1227.9 199.8 L1354.8 273.5 L1376.6 260.9 A205.0 119.0 0 0 1 1116.2 412.5 L1139.8 398.9 L1011.8 325.6 L989.1 338.7 A205.0 119.0 0 0 1 1249.4 187.4 Z" fill="#60543a"/><path d="M1249.4 186.4 L1227.9 198.8 L1354.8 272.5 L1376.6 259.9 A205.0 119.0 0 0 1 1116.2 411.5 L1139.8 397.9 L1011.8 324.6 L989.1 337.7 A205.0 119.0 0 0 1 1249.4 186.4 Z" fill="#5c5139"/><path d="M1249.4 185.4 L1227.9 197.8 L1354.8 271.5 L1376.6 258.9 A205.0 119.0 0 0 1 1116.2 410.5 L1139.8 396.9 L1011.8 323.6 L989.1 336.7 A205.0 119.0 0 0 1 1249.4 185.4 Z" fill="#594e37"/><path d="M1249.4 184.4 L1227.9 196.8 L1354.8 270.5 L1376.6 257.9 A205.0 119.0 0 0 1 1116.2 409.5 L1139.8 395.9 L1011.8 322.6 L989.1 335.7 A205.0 119.0 0 0 1 1249.4 184.4 Z" fill="#564c36"/><path d="M1249.4 183.4 L1227.9 195.8 L1354.8 269.5 L1376.6 256.9 A205.0 119.0 0 0 1 1116.2 408.5 L1139.8 394.9 L1011.8 321.6 L989.1 334.7 A205.0 119.0 0 0 1 1249.4 183.4 Z" fill="#524934"/><path d="M1249.4 182.4 L1227.9 194.8 L1354.8 268.5 L1376.6 255.9 A205.0 119.0 0 0 1 1116.2 407.5 L1139.8 393.9 L1011.8 320.6 L989.1 333.7 A205.0 119.0 0 0 1 1249.4 182.4 Z" fill="#4f4633"/><path d="M1249.4 181.4 L1227.9 193.8 L1354.8 267.5 L1376.6 254.9 A205.0 119.0 0 0 1 1116.2 406.5 L1139.8 392.9 L1011.8 319.6 L989.1 332.7 A205.0 119.0 0 0 1 1249.4 181.4 Z" fill="#4c4432"/><path d="M1249.4 219.4 L1227.9 231.8 L1354.8 305.5 L1376.6 292.9 A205.0 119.0 0 0 1 1116.2 444.5 L1139.8 430.9 L1011.8 357.6 L989.1 370.7 A205.0 119.0 0 0 1 1249.4 219.4 Z" fill="none" stroke="#111" stroke-width="1" /><path d="M1011.8 319.6L1140 393.6V420L1011.8 346z" fill="#3a4a3a" opacity="0.35"/><path d="M1011.8 310L1142.7 384V415.3L1011.8 339z" fill="#9ad0c0" opacity="0.12" stroke="#8ac8b8" stroke-width="0.8" stroke-opacity="0.5"/><path d="M1011.8 319.6V357.6" stroke="#111" stroke-width="1"/></g><path d="M1249.4 181.4 L1227.9 193.8 L1354.8 267.5 L1376.6 254.9 A205.0 119.0 0 0 1 1116.2 406.5 L1139.8 392.9 L1011.8 319.6 L989.1 332.7 A205.0 119.0 0 0 1 1249.4 181.4 Z" fill="#3e7a40" stroke="#111" stroke-width="1.3"/><path d="M1249.4 177.4 L1227.9 189.8 L1354.8 263.5 L1376.6 250.9 A205.0 119.0 0 0 1 1116.2 402.5 L1139.8 388.9 L1011.8 315.6 L989.1 328.7 A205.0 119.0 0 0 1 1249.4 177.4 Z" fill="#558f50" stroke="#111" stroke-width="1.4" stroke-linejoin="round"/><clipPath id="plclip"><path d="M1249.4 177.4 L1227.9 189.8 L1354.8 263.5 L1376.6 250.9 A205.0 119.0 0 0 1 1116.2 402.5 L1139.8 388.9 L1011.8 315.6 L989.1 328.7 A205.0 119.0 0 0 1 1249.4 177.4 Z"/></clipPath><ellipse clip-path="url(#plclip)" cx="1178" cy="298" rx="190" ry="104" fill="none" stroke="#4a8446" stroke-width="1.2" opacity="0.6"/><mask id="tireMask" maskUnits="userSpaceOnUse" x="1000" y="350" width="150" height="150"><rect x="1000" y="350" width="150" height="150" fill="#fff"/><g transform="matrix(32.8 18.0 0 -36.6 1070.5 427.0)"><circle r="0.87" fill="#000"/></g></mask><g mask="url(#tireMask)"><g transform="matrix(32.8 18.0 0 -36.6 1070.5 427.0)"><circle r="0.95" fill="none" stroke="#111" stroke-width="0.14"/></g><g transform="matrix(32.8 18.0 0 -36.6 1071.4 426.5)"><circle r="0.95" fill="none" stroke="#111" stroke-width="0.14"/></g><g transform="matrix(32.8 18.0 0 -36.6 1072.4 426.1)"><circle r="0.95" fill="none" stroke="#111" stroke-width="0.14"/></g><g transform="matrix(32.8 18.0 0 -36.6 1073.3 425.6)"><circle r="0.95" fill="none" stroke="#111" stroke-width="0.14"/></g><g transform="matrix(32.8 18.0 0 -36.6 1074.2 425.2)"><circle r="0.95" fill="none" stroke="#111" stroke-width="0.14"/></g><g transform="matrix(32.8 18.0 0 -36.6 1075.1 424.7)"><circle r="0.95" fill="none" stroke="#111" stroke-width="0.14"/></g><g transform="matrix(32.8 18.0 0 -36.6 1076.1 424.3)"><circle r="0.95" fill="none" stroke="#111" stroke-width="0.14"/></g><g transform="matrix(32.8 18.0 0 -36.6 1077.0 423.8)"><circle r="0.95" fill="none" stroke="#111" stroke-width="0.14"/></g><g transform="matrix(32.8 18.0 0 -36.6 1077.0 423.8)"><circle r="1.02" fill="none" stroke="#000" stroke-width="0.04"/></g></g><g transform="matrix(32.8 18.0 0 -36.6 1070.5 427.0)"><circle r="0.93" fill="none" stroke="#a8403a" stroke-width="0.13"/><circle r="1.0" fill="none" stroke="#111" stroke-width="0.04"/><circle r="0.86" fill="none" stroke="#111" stroke-width="0.04"/><g transform="rotate(0)"><path d="M-0.09 0.2L-0.07 0.87H0.07L0.09 0.2z" fill="#a8403a" stroke="#111" stroke-width="0.035"/><path d="M-0.03 0.35L-0.025 0.78H0.025L0.03 0.35z" fill="#1a1a1a"/></g><g transform="rotate(72)"><path d="M-0.09 0.2L-0.07 0.87H0.07L0.09 0.2z" fill="#a8403a" stroke="#111" stroke-width="0.035"/><path d="M-0.03 0.35L-0.025 0.78H0.025L0.03 0.35z" fill="#1a1a1a"/></g><g transform="rotate(144)"><path d="M-0.09 0.2L-0.07 0.87H0.07L0.09 0.2z" fill="#a8403a" stroke="#111" stroke-width="0.035"/><path d="M-0.03 0.35L-0.025 0.78H0.025L0.03 0.35z" fill="#1a1a1a"/></g><g transform="rotate(216)"><path d="M-0.09 0.2L-0.07 0.87H0.07L0.09 0.2z" fill="#a8403a" stroke="#111" stroke-width="0.035"/><path d="M-0.03 0.35L-0.025 0.78H0.025L0.03 0.35z" fill="#1a1a1a"/></g><g transform="rotate(288)"><path d="M-0.09 0.2L-0.07 0.87H0.07L0.09 0.2z" fill="#a8403a" stroke="#111" stroke-width="0.035"/><path d="M-0.03 0.35L-0.025 0.78H0.025L0.03 0.35z" fill="#1a1a1a"/></g><circle r="0.24" fill="#a8403a" stroke="#111" stroke-width="0.03"/></g><g transform="translate(1170.0,285.5)"><rect width="25" height="15" fill="#acceaa" opacity="0.95"/><rect width="25" height="2.5" fill="#e2eede"/><path d="M0 10h5v-5h5v5h4v-5h5v5h6v5h-25z" fill="#6aae92"/></g><g transform="translate(1276.0,293.0)"><rect width="25" height="15" fill="#acceaa" opacity="0.95"/><rect width="25" height="2.5" fill="#e2eede"/><path d="M0 10h5v-5h5v5h4v-5h5v5h6v5h-25z" fill="#6aae92"/></g><rect x="1297.5" y="241" width="1" height="52" fill="#8cc8b8"/><path d="M1287 241h12v10z" fill="#6ab0a0" opacity="0.9"/><ellipse cx="1297" cy="297" rx="4.5" ry="6" transform="rotate(-30 1297 297)" fill="#d0e4d0" stroke="#6ab8a8" stroke-width="1.6"/><g opacity="0.7"><g transform="translate(1070.0,412.5)"><rect width="25" height="15" fill="#acceaa" opacity="0.95"/><rect width="25" height="2.5" fill="#e2eede"/><path d="M0 10h5v-5h5v5h4v-5h5v5h6v5h-25z" fill="#6aae92"/></g></g><circle cx="1072" cy="425" r="4.5" fill="#c8e4e0" stroke="#70b8b0" stroke-width="1.2" opacity="0.7"/><rect x="1072" y="425" width="1" height="52" fill="#8cc8c0"/><path d="M1060 465l13 3v10z" fill="#88c8c0" opacity="0.9"/><path d="M1310 466L1268 490" stroke="#8cc8c0" stroke-width="1" stroke-dasharray="2 1"/><path d="M1258 487l14 -3l-3 9z" fill="#88c8c0" opacity="0.9"/><ellipse cx="1309.5" cy="398" rx="9" ry="5" fill="#d8d0b0" opacity="0.3"/>
</g>
</svg>

<!-- BROWSER PANEL -->
<div class="a" style="left:0;top:144px;width:298px;height:25px;background:#f1f1f1;border:1px solid #d4d4d4;border-left:none"></div>
<div class="t" style="left:23px;top:151px;font-size:11px;color:#555;letter-spacing:-0.7px">BROWSER</div>
<div class="row" style="left:34px;top:174px;width:217px"></div>
<div class="a" style="left:64px;top:176px;width:162px;height:16px;background:#8d8d8d"></div>
<div class="rt" style="left:97px;top:178px;color:#fff;font-weight:bold;font-size:11.6px">line follower task1 v3</div>
<div class="row" style="left:52px;top:198px;width:130px"></div>
<div class="rt" style="left:81px;top:203px">Document Settings</div>
<div class="row" style="left:52px;top:222px;width:110px"></div>
<div class="rt" style="left:85px;top:227px">Named Views</div>
<div class="row" style="left:52px;top:246px;width:95px"></div>
<div class="rt" style="left:110px;top:251px">Origin</div>
<div class="row" style="left:52px;top:270px;width:131px"></div>
<div class="rt" style="left:110px;top:275px">Relationships</div>
<div class="row" style="left:70px;top:294px;width:95px"></div>
<div class="rt" style="left:128px;top:299px">Joints</div>
<div class="row" style="left:52px;top:318px;width:113px"></div>
<div class="rt" style="left:110px;top:323px">Sketches</div>
<div class="row" style="left:57px;top:342px;width:127px"></div>
<div class="rt" style="left:115px;top:347px">left_wheel:1</div>
<div class="row" style="left:57px;top:366px;width:131px"></div>
<div class="rt" style="left:115px;top:371px">right_wheel:1</div>
<div class="row" style="left:57px;top:390px;width:119px"></div>
<div class="rt" style="left:115px;top:395px">base_link:1</div>
<div class="row" style="left:57px;top:414px;width:159px"></div>
<div class="rt" style="left:115px;top:419px">castor_wheel (1):1</div>
<svg width="300" height="300" style="left:0;top:140px">
<defs>
<symbol id="eye" viewBox="0 0 16 10" width="16" height="10"><path d="M0.5 5C3 1 5.5 0 8 0s5 1 7.5 5C13 9 10.5 10 8 10S3 9 .5 5z" fill="#999"/><circle cx="8" cy="5" r="2.6" fill="#f1f1f1"/><circle cx="8" cy="5" r="1.6" fill="#999"/></symbol>
<symbol id="fold" viewBox="0 0 16 13" width="16" height="13"><path d="M0 1h6l1 1h9v11H0z" fill="#9a9a9a"/><rect x="0" y="2.2" width="7" height="1" fill="#f1f1f1"/></symbol>
<symbol id="tri" viewBox="0 0 10 14" width="10" height="14"><path d="M1 1l8 6-8 6z" fill="#e0e0e4" stroke="#222" stroke-width="1.1" stroke-linejoin="round"/></symbol>
<symbol id="trd" viewBox="0 0 12 12" width="12" height="12"><linearGradient id="tg" x1="0" x2="1"><stop offset="0" stop-color="#333"/><stop offset="1" stop-color="#ddd"/></linearGradient><path d="M11 1v10H1z" fill="url(#tg)" stroke="#222" stroke-width="1" stroke-linejoin="round"/></symbol>
<symbol id="cmp" viewBox="0 0 16 16" width="16" height="16"><g stroke="#1a1a1a" stroke-width="0.9" stroke-linejoin="round"><path d="M0.8 4L3.6 1.2H15V12L12.2 14.8H0.8z" fill="#e6e6ea"/><path d="M0.8 4L3.6 1.2H15L12.2 4z" fill="#f6f6f8" stroke-width="0"/><path d="M12.2 4L15 1.2V12L12.2 14.8z" fill="#d0d0d6" stroke-width="0"/></g><path d="M0.8 4L3.6 1.2H15V12L12.2 14.8H0.8z" fill="none" stroke="#1a1a1a" stroke-width="0.9" stroke-linejoin="round"/></symbol>
<symbol id="asm" viewBox="0 0 16 16" width="16" height="16"><g stroke="#1a1a1a" stroke-width="0.9" stroke-linejoin="round"><path d="M0.8 3.2L3 1H8.6V7.2L6.2 9.6V15.2H0.8z" fill="#e6e6ea"/><path d="M0.8 3.2L3 1H8.6L6.2 3.2z" fill="#f6f6f8"/><path d="M6.2 3.2L8.6 1V7.2L6.2 9.6z" fill="#d4d4da"/><path d="M6.2 9.6H12.6V15.2H6.2z" fill="#e6e6ea"/><path d="M6.2 9.6L8.6 7.2H15L12.6 9.6z" fill="#f6f6f8"/><path d="M12.6 9.6L15 7.2V12.8L12.6 15.2z" fill="#d4d4da"/></g></symbol>
</defs>
<path d="M8 12l-4.5 4 4.5 4zM13 12l-4.5 4 4.5 4z" fill="#333"/>
<circle cx="281.5" cy="16" r="5" fill="#2a2a2a"/><rect x="278.5" y="15.3" width="6" height="1.5" fill="#fff"/>
<!-- root -->
<use href="#trd" x="15" y="38"/>
<rect x="36" y="37" width="3" height="14" fill="#f7a3a8"/>
<use href="#eye" x="42" y="39"/>
<use href="#asm" x="67" y="36"/>
<circle cx="236" cy="44" r="6" fill="none" stroke="#333" stroke-width="1.1"/><circle cx="236" cy="44" r="2.6" fill="#222"/>
<use href="#tri" x="33" y="61"/>
<g transform="translate(55,62)" fill="#7a7a7a"><circle cx="6.5" cy="6.5" r="4.2"/><path d="M5.2 0h2.6v13H5.2zM0 5.2h13v2.6H0zM1.4 3.2l1.8-1.8 9.4 9.4-1.8 1.8zM9.8 1.4l1.8 1.8-9.4 9.4-1.8-1.8z"/><circle cx="6.5" cy="6.5" r="2" fill="#f1f1f1"/></g>
<use href="#tri" x="33" y="85"/>
<use href="#fold" x="55" y="85"/>
<use href="#tri" x="33" y="109"/>
<g transform="translate(55,110)"><path d="M.5 5C3 1 5.5 0 8 0s5 1 7.5 5C13 9 10.5 10 8 10S3 9 .5 5z" fill="none" stroke="#aaa" stroke-width="0.9"/><circle cx="8" cy="5" r="2.3" fill="none" stroke="#aaa" stroke-width="0.9"/><path d="M2 -1l12 12" stroke="#999" stroke-width="0.9"/></g>
<use href="#fold" x="80" y="109"/>
<use href="#trd" x="33" y="134"/>
<use href="#eye" x="55" y="135"/>
<use href="#fold" x="80" y="133"/>
<use href="#tri" x="52" y="157"/>
<use href="#eye" x="73" y="159"/>
<use href="#fold" x="98" y="157"/>
<use href="#tri" x="33" y="181"/>
<use href="#eye" x="55" y="183"/>
<use href="#fold" x="80" y="181"/>
<rect x="52" y="202" width="5" height="19.5" fill="#5082ee"/>
<use href="#tri" x="33" y="205"/><use href="#eye" x="60" y="207"/><use href="#cmp" x="85" y="204"/>
<rect x="52" y="226" width="5" height="19.5" fill="#f25468"/>
<use href="#tri" x="33" y="229"/><use href="#eye" x="60" y="231"/><use href="#cmp" x="85" y="228"/>
<rect x="52" y="250" width="5" height="19.5" fill="#bb88ee"/>
<use href="#tri" x="33" y="253"/><use href="#eye" x="60" y="255"/><use href="#asm" x="85" y="252"/>
<rect x="52" y="274" width="5" height="19.5" fill="#5ef7cf"/>
<use href="#tri" x="33" y="277"/><use href="#eye" x="60" y="279"/><use href="#asm" x="85" y="276"/>
</svg>

<!-- COMMENTS PANEL -->
<div class="a" style="left:0;top:953px;width:298px;height:25px;background:#f1f1f1;border:1px solid #d4d4d4;border-left:none"></div>
<div class="t" style="left:23px;top:960px;font-size:11px;color:#555;letter-spacing:-0.85px">COMMENTS</div>
<svg width="20" height="20" style="left:271px;top:955px">
<circle cx="10.5" cy="10" r="5" fill="#2a2a2a"/><path d="M10.5 7.2v5.6M7.7 10h5.6" stroke="#fff" stroke-width="1.4"/>
</svg>
<!-- TIMELINE -->
<div class="a" style="left:0;top:982px;width:1512px;height:41px;background:#f0f0f0"></div>
<div class="a" style="left:376px;top:982px;width:752px;height:7px;background:#c9c9c9;border-radius:4px"></div>
<div class="a" style="left:130px;top:1021px;width:1382px;height:2px;background:#d0d0d0"></div>
<svg width="1512" height="1023" style="left:0;top:0">
<defs>
<symbol id="i_sk" viewBox="0 0 20 20" width="20" height="20">
<rect x="2.5" y="1.5" width="14" height="15" fill="#f4f4f4" stroke="#aaa" stroke-width="0.8"/>
<g fill="#2a8de0"><rect x="1.6" y="0.8" width="2" height="2"/><rect x="15.5" y="0.8" width="2" height="2"/><rect x="1.6" y="15.5" width="2" height="2"/><rect x="5.5" y="4.5" width="1.6" height="1.6"/><rect x="11.5" y="4.5" width="1.6" height="1.6"/><rect x="5.5" y="10.5" width="1.6" height="1.6"/></g>
<path d="M6.3 5.3h6M6.3 5.3v6M6.3 11.3c3 0 6-2 6-6" fill="none" stroke="#555" stroke-width="0.7"/>
<path d="M11 17l6-6 2 2-6 6z" fill="#f4b53f"/><path d="M17 11l1.3-1.3 2 2-1.3 1.3z" fill="#e33"/><path d="M11 17l-1 2.5 2.5-.5z" fill="#444"/>
</symbol>
<symbol id="i_sel" viewBox="0 0 20 20" width="20" height="20">
<rect x="-2" y="-2" width="24" height="24" rx="2" fill="#0f8fd6"/>
<rect x="2.5" y="1.5" width="14" height="15" fill="none" stroke="#fff" stroke-width="1" stroke-dasharray="2 1"/>
<path d="M11 17l6-6 2 2-6 6z" fill="#f4b53f"/><path d="M17 11l1.3-1.3 2 2-1.3 1.3z" fill="#e33"/>
</symbol>
<symbol id="i_ex" viewBox="0 0 20 20" width="20" height="20">
<path d="M3 5l3-3h10v12l-3 3H3z" fill="#6ab0e6"/><path d="M3 5l3-3h10l-3 3z" fill="#8ccaf5"/><path d="M13 5l3-3v12l-3 3z" fill="#3c8acb"/>
<path d="M3 17h10l3-3v2l-3 3H3z" fill="#aaa"/>
<path d="M18.5 15V2M17 4l1.5-2.5L20 4" fill="none" stroke="#333" stroke-width="1"/>
</symbol>
<symbol id="i_ooo" viewBox="0 0 20 20" width="20" height="20">
<g fill="none" stroke="#555" stroke-width="1.1"><rect x="1" y="6" width="4" height="5.5" rx="0.5"/><rect x="8" y="6" width="4" height="5.5" rx="0.5"/><rect x="15" y="6" width="4" height="5.5" rx="0.5"/></g>
</symbol>
<symbol id="i_mir" viewBox="0 0 20 20" width="20" height="20">
<path d="M3 5l4-3 2 3v12l-3-2-3 2z" fill="#bbb" stroke="#777" stroke-width="0.7"/><path d="M17 5l-4-3-2 3v12l3-2 3 2z" fill="#ccc" stroke="#777" stroke-width="0.7"/>
</symbol>
<symbol id="i_flag" viewBox="0 0 20 20" width="20" height="20">
<rect x="2.5" y="1.5" width="5" height="17" fill="#fff" stroke="#666" stroke-width="0.8"/><rect x="7.5" y="1.5" width="10" height="7" fill="#3c90db"/>
</symbol>
<symbol id="i_fil" viewBox="0 0 20 20" width="20" height="20">
<path d="M2 6l3-3h6c4 0 7 3 7 7v7l-3 3H2z" fill="#d8d8d8" stroke="#666" stroke-width="0.8"/>
</symbol>
<symbol id="i_cmb" viewBox="0 0 20 20" width="20" height="20">
<rect x="1.5" y="1.5" width="8" height="6" rx="2" fill="#eee" stroke="#555" stroke-width="0.8"/><path d="M3 9v4h4" fill="none" stroke="#333" stroke-width="1"/><path d="M9 12l3-2h6v7l-3 2H9z" fill="#3c90db"/>
</symbol>
<symbol id="i_cpy" viewBox="0 0 20 20" width="20" height="20">
<path d="M2 3l2-2h6v8l-2 2H2z" fill="#eee" stroke="#999" stroke-width="0.7"/><path d="M4 10v4h4" fill="none" stroke="#e33" stroke-width="1"/><path d="M9 10l2-2h7v8l-2 2H9z" fill="#e6e6e6" stroke="#666" stroke-width="0.8"/>
</symbol>
<symbol id="i_del" viewBox="0 0 20 20" width="20" height="20">
<path d="M1 1l4 4M5 1L1 5" stroke="#e33" stroke-width="1.4"/><path d="M7 10l2-2h9v8l-2 2H7z" fill="#bde0f4" stroke="#555" stroke-width="0.8"/>
</symbol>
</defs>
<rect x="138" y="990" width="356" height="6" fill="#ffabad"/><rect x="497" y="990" width="11" height="6" fill="#ffabad"/><rect x="508" y="990" width="10" height="6" fill="#ffb273"/><rect x="522" y="990" width="10" height="6" fill="#ffabad"/><rect x="532" y="990" width="11" height="6" fill="#6cf7d6"/><rect x="546" y="990" width="92" height="6" fill="#ffabad"/><rect x="642" y="990" width="10" height="6" fill="#ffabad"/><rect x="652" y="990" width="11" height="6" fill="#6089e8"/><rect x="666" y="990" width="10" height="6" fill="#ffabad"/><rect x="676" y="990" width="11" height="6" fill="#f96671"/><rect x="690" y="990" width="236" height="6" fill="#ffabad"/><rect x="930" y="990" width="44" height="6" fill="#bf8cef"/><rect x="978" y="990" width="44" height="6" fill="#ffabad"/><rect x="1026" y="990" width="20" height="6" fill="#bf8cef"/><rect x="1050" y="990" width="44" height="6" fill="#ffabad"/><rect x="1098" y="990" width="20" height="6" fill="#bf8cef"/><rect x="1122" y="990" width="4" height="6" fill="#ffabad"/><rect x="1126" y="990" width="16" height="6" fill="#6cf7d6"/><rect x="1146" y="990" width="68" height="6" fill="#ffabad"/><rect x="1218" y="990" width="20" height="6" fill="#bf8cef"/><rect x="1242" y="990" width="92" height="6" fill="#ffabad"/><rect x="1338" y="990" width="20" height="6" fill="#bf8cef"/><rect x="1362" y="990" width="20" height="6" fill="#ffabad"/><rect x="1386" y="990" width="20" height="6" fill="#e8704a"/><rect x="1410" y="990" width="20" height="6" fill="#ffabad"/><rect x="1434" y="990" width="20" height="6" fill="#bf8cef"/>
<use href="#i_sk" x="138" y="997"/><rect x="147" y="1016" width="1.2" height="6" fill="#b0b0b0"/><use href="#i_sk" x="162" y="997"/><rect x="171" y="1016" width="1.2" height="6" fill="#b0b0b0"/><use href="#i_ex" x="186" y="997"/><rect x="195" y="1016" width="1.2" height="6" fill="#b0b0b0"/><use href="#i_sk" x="210" y="997"/><rect x="219" y="1016" width="1.2" height="6" fill="#b0b0b0"/><use href="#i_sk" x="234" y="997"/><rect x="243" y="1016" width="1.2" height="6" fill="#b0b0b0"/><use href="#i_ex" x="258" y="997"/><rect x="267" y="1016" width="1.2" height="6" fill="#b0b0b0"/><use href="#i_sk" x="282" y="997"/><rect x="291" y="1016" width="1.2" height="6" fill="#b0b0b0"/><use href="#i_ex" x="306" y="997"/><rect x="315" y="1016" width="1.2" height="6" fill="#b0b0b0"/><use href="#i_sk" x="330" y="997"/><rect x="339" y="1016" width="1.2" height="6" fill="#b0b0b0"/><use href="#i_ex" x="354" y="997"/><rect x="363" y="1016" width="1.2" height="6" fill="#b0b0b0"/><use href="#i_sk" x="378" y="997"/><rect x="387" y="1016" width="1.2" height="6" fill="#b0b0b0"/><use href="#i_ex" x="402" y="997"/><rect x="411" y="1016" width="1.2" height="6" fill="#b0b0b0"/><use href="#i_sk" x="426" y="997"/><rect x="435" y="1016" width="1.2" height="6" fill="#b0b0b0"/><use href="#i_sk" x="450" y="997"/><rect x="459" y="1016" width="1.2" height="6" fill="#b0b0b0"/><use href="#i_ex" x="474" y="997"/><rect x="483" y="1016" width="1.2" height="6" fill="#b0b0b0"/><use href="#i_ooo" x="498" y="997"/><rect x="507" y="1016" width="1.2" height="6" fill="#b0b0b0"/><use href="#i_ooo" x="522" y="997"/><rect x="531" y="1016" width="1.2" height="6" fill="#b0b0b0"/><use href="#i_sk" x="546" y="997"/><rect x="555" y="1016" width="1.2" height="6" fill="#b0b0b0"/><use href="#i_ex" x="570" y="997"/><rect x="579" y="1016" width="1.2" height="6" fill="#b0b0b0"/><use href="#i_mir" x="594" y="997"/><rect x="603" y="1016" width="1.2" height="6" fill="#b0b0b0"/><use href="#i_mir" x="618" y="997"/><rect x="627" y="1016" width="1.2" height="6" fill="#b0b0b0"/><use href="#i_ooo" x="642" y="997"/><rect x="651" y="1016" width="1.2" height="6" fill="#b0b0b0"/><use href="#i_ooo" x="666" y="997"/><rect x="675" y="1016" width="1.2" height="6" fill="#b0b0b0"/><use href="#i_flag" x="690" y="997"/><rect x="699" y="1016" width="1.2" height="6" fill="#b0b0b0"/><use href="#i_flag" x="714" y="997"/><rect x="723" y="1016" width="1.2" height="6" fill="#b0b0b0"/><use href="#i_sk" x="738" y="997"/><rect x="747" y="1016" width="1.2" height="6" fill="#b0b0b0"/><use href="#i_ex" x="762" y="997"/><rect x="771" y="1016" width="1.2" height="6" fill="#b0b0b0"/><use href="#i_sel" x="786" y="997"/><rect x="795" y="1016" width="1.2" height="6" fill="#b0b0b0"/><use href="#i_sk" x="810" y="997"/><rect x="819" y="1016" width="1.2" height="6" fill="#b0b0b0"/><use href="#i_ex" x="834" y="997"/><rect x="843" y="1016" width="1.2" height="6" fill="#b0b0b0"/><use href="#i_sk" x="858" y="997"/><rect x="867" y="1016" width="1.2" height="6" fill="#b0b0b0"/><use href="#i_fil" x="882" y="997"/><rect x="891" y="1016" width="1.2" height="6" fill="#b0b0b0"/><use href="#i_cmb" x="906" y="997"/><rect x="915" y="1016" width="1.2" height="6" fill="#b0b0b0"/><use href="#i_cpy" x="930" y="997"/><rect x="939" y="1016" width="1.2" height="6" fill="#b0b0b0"/><use href="#i_cpy" x="954" y="997"/><rect x="963" y="1016" width="1.2" height="6" fill="#b0b0b0"/><use href="#i_mir" x="978" y="997"/><rect x="987" y="1016" width="1.2" height="6" fill="#b0b0b0"/><use href="#i_mir" x="1002" y="997"/><rect x="1011" y="1016" width="1.2" height="6" fill="#b0b0b0"/><use href="#i_del" x="1026" y="997"/><rect x="1035" y="1016" width="1.2" height="6" fill="#b0b0b0"/><use href="#i_flag" x="1050" y="997"/><rect x="1059" y="1016" width="1.2" height="6" fill="#b0b0b0"/><use href="#i_sk" x="1074" y="997"/><rect x="1083" y="1016" width="1.2" height="6" fill="#b0b0b0"/><use href="#i_ex" x="1098" y="997"/><rect x="1107" y="1016" width="1.2" height="6" fill="#b0b0b0"/><use href="#i_ooo" x="1122" y="997"/><rect x="1131" y="1016" width="1.2" height="6" fill="#b0b0b0"/><use href="#i_mir" x="1146" y="997"/><rect x="1155" y="1016" width="1.2" height="6" fill="#b0b0b0"/><use href="#i_ex" x="1170" y="997"/><rect x="1179" y="1016" width="1.2" height="6" fill="#b0b0b0"/><use href="#i_cmb" x="1194" y="997"/><rect x="1203" y="1016" width="1.2" height="6" fill="#b0b0b0"/><use href="#i_cpy" x="1218" y="997"/><rect x="1227" y="1016" width="1.2" height="6" fill="#b0b0b0"/><use href="#i_flag" x="1242" y="997"/><rect x="1251" y="1016" width="1.2" height="6" fill="#b0b0b0"/><use href="#i_sk" x="1266" y="997"/><rect x="1275" y="1016" width="1.2" height="6" fill="#b0b0b0"/><use href="#i_flag" x="1290" y="997"/><rect x="1299" y="1016" width="1.2" height="6" fill="#b0b0b0"/><use href="#i_sk" x="1314" y="997"/><rect x="1323" y="1016" width="1.2" height="6" fill="#b0b0b0"/><use href="#i_ex" x="1338" y="997"/><rect x="1347" y="1016" width="1.2" height="6" fill="#b0b0b0"/><use href="#i_sk" x="1362" y="997"/><rect x="1371" y="1016" width="1.2" height="6" fill="#b0b0b0"/><use href="#i_ex" x="1386" y="997"/><rect x="1395" y="1016" width="1.2" height="6" fill="#b0b0b0"/><use href="#i_sk" x="1410" y="997"/><rect x="1419" y="1016" width="1.2" height="6" fill="#b0b0b0"/><use href="#i_ex" x="1434" y="997"/><rect x="1443" y="1016" width="1.2" height="6" fill="#b0b0b0"/>
<g fill="#666"><rect x="502" y="1017" width="9" height="7" rx="1"/><rect x="526" y="1017" width="9" height="7" rx="1"/><rect x="646" y="1017" width="9" height="7" rx="1"/><rect x="670" y="1017" width="9" height="7" rx="1"/><rect x="1126" y="1017" width="9" height="7" rx="1"/></g>
<g stroke="#fff" stroke-width="1"><path d="M506.5 1018.5v5M504 1021h5M530.5 1018.5v5M528 1021h5M650.5 1018.5v5M648 1021h5M674.5 1018.5v5M672 1021h5M1130.5 1018.5v5M1128 1021h5"/></g>
<!-- play controls -->
<g fill="#555"><rect x="5" y="1004" width="1.8" height="12"/><path d="M17 1004v12l-9-6z"/>
<path d="M38 1004v12l-8-6z"/><rect x="39" y="1008" width="1.8" height="4"/>
<path d="M55 1003v14l11-7z"/>
<rect x="79" y="1008" width="1.8" height="4"/><path d="M82 1004v12l8-6z"/>
<path d="M105 1004v12l9-6z"/><rect x="114" y="1004" width="1.8" height="12"/></g>
<!-- gear -->
<g transform="translate(1492,1011)"><circle r="5.5" fill="#777"/><g stroke="#777" stroke-width="3"><path d="M0 -8V8M-8 0H8M-5.7 -5.7L5.7 5.7M5.7 -5.7L-5.7 5.7"/></g><circle r="2.5" fill="#f0f0f0"/></g>
</svg>

</body></html>
